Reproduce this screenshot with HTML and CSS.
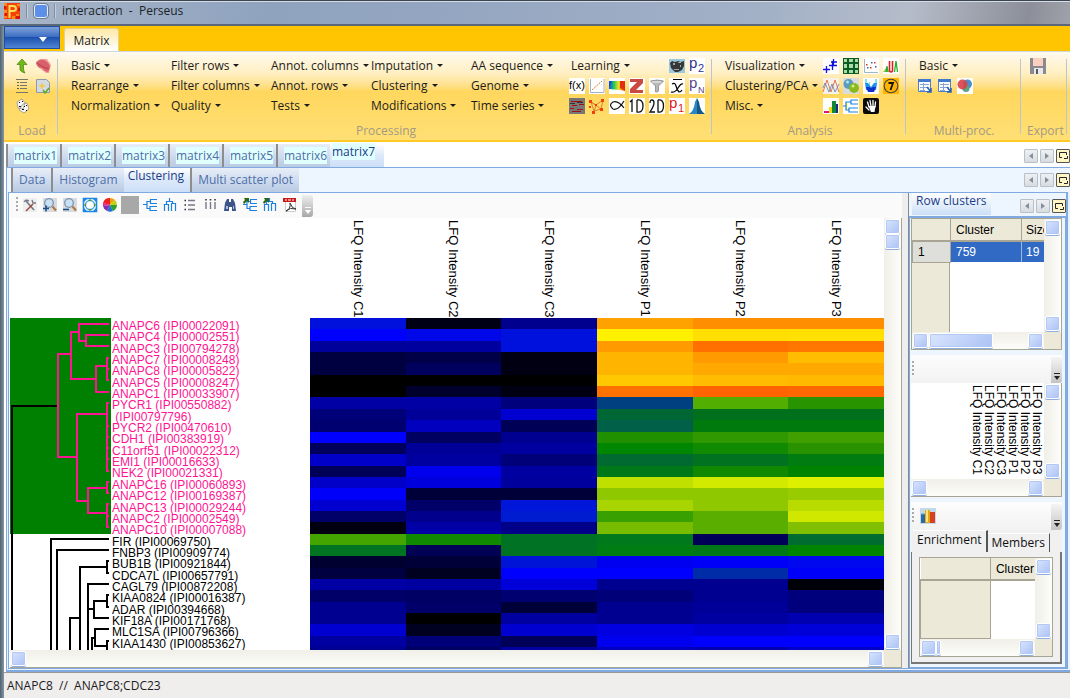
FILE: index.html
```html
<!DOCTYPE html>
<html lang="en">
<head>
<meta charset="utf-8">
<title>interaction - Perseus</title>
<link rel="stylesheet" href="styles.css">
</head>
<body>
<div class="window">
  <header class="titlebar">
    <svg class="ic" viewBox="0 0 16 16"><path fill="#f5420c" d="M0 0h16v16H0z"/><path fill="#ff8a1c" d="M0 0h3v3H0zM13 1h3v2h-3zM0 7h3v3H0zM12 11h3v2h-3zM8 13h3v3H8zM0 13h3v2H0z"/><path fill="#d81500" d="M0 3h2v3H0zM14 5h2v3h-2zM1 10h2v3H1zM12 13h4v3h-4z"/><path fill="none" stroke="#ffdf55" stroke-width="2" d="M5.500 15V3H9q3 0 3 2.500T9 8H6"/></svg>
    <span class="tsep"></span>
    <button class="quick" aria-label="Quick access"></button>
    <span class="tsep"></span>
    <h1>interaction&nbsp; -&nbsp; Perseus</h1>
  </header>

  <nav class="ribbon-tabs">
    <button class="app-menu" aria-label="Application menu"><i class="caret"></i></button>
    <button class="ribbon-tab">Matrix</button>
  </nav>

  <section class="ribbon">
    <div class="group load">
      <div class="cells">
        <button class="ib" aria-label="Generic upload"><svg class="ic" viewBox="0 0 16 16"><path fill="#72b81c" stroke="#4c8e0c" stroke-width=".8" d="M7 1 2 6.500h3V12q1 2 5 3-1.500-2-1.500-4V6.500H12z"/></svg></button>
        <button class="ib" aria-label="Raw upload"><svg class="ic" viewBox="0 0 16 16"><path fill="#f0a09a" d="M1 4 5 1h7l4 6-2 8h-3L3 9z"/><path fill="#d9606a" d="M1 5q3-4 8-3 5 2 6 7l-2 5q-4-1-6-4-5 0-6-5"/><path stroke="#b84050" fill="none" d="m2 5 6 4 6 2"/></svg></button>
        <button class="ib" aria-label="Text list"><svg class="ic" viewBox="0 0 16 16"><path stroke="#776" fill="none" d="M1 1.500h12M1 14.500h12M5 4.500h7M5 7.500h7M5 10.500h7"/><path stroke="#332" stroke-width="1.500" stroke-dasharray="1 2" d="M3 4v8"/></svg></button>
        <button class="ib" aria-label="New script"><svg class="ic" viewBox="0 0 16 16"><path fill="#d4dae2" stroke="#8e9aa8" d="M1.500 1.500h10l3 3v10h-13z"/><path fill="#f6c84a" d="m7 4 1 3 3 1-3 1-1 3-1-3-3-1 3-1z"/><path fill="none" stroke="#5aa820" stroke-width="1.500" d="m8 12 2 3 4-5"/></svg></button>
        <button class="ib" aria-label="Random"><svg class="ic" viewBox="0 0 16 16"><path fill="#f6f6f6" stroke="#888" stroke-width=".7" d="m2 4 5-3 3 4-2 6-5-1zM8 6l4-1 2 6-5 4-5-3z"/><path fill="#111" d="M4 4h1v1H4zM7 3h1v1H7zM4 8h2v1H4zM9 8h1v1H9zM7 11h2v1H7zM11 12h1v1h-1zM11 7h1v1h-1z"/></svg></button>
      </div>
      <p>Load</p>
    </div>
    <div class="group processing">
      <div class="menus">
        <button>Basic<i class="caret"></i></button><button>Rearrange<i class="caret"></i></button><button>Normalization<i class="caret"></i></button>
        <button>Filter rows<i class="caret"></i></button><button>Filter columns<i class="caret"></i></button><button>Quality<i class="caret"></i></button>
        <button>Annot. columns<i class="caret"></i></button><button>Annot. rows<i class="caret"></i></button><button>Tests<i class="caret"></i></button>
        <button>Imputation<i class="caret"></i></button><button>Clustering<i class="caret"></i></button><button>Modifications<i class="caret"></i></button>
        <button>AA sequence<i class="caret"></i></button><button>Genome<i class="caret"></i></button><button>Time series<i class="caret"></i></button>
      </div>
      <div class="cells seven">
        <button class="wide">Learning<i class="caret"></i></button>
        <button class="ib" aria-label="Parameter optimization"><svg class="ic" viewBox="0 0 16 16"><path fill="#9cc8dc" d="M0 1h16v14H0z"/><path fill="#35383b" d="m1 5 2-2 3 1 3-1 3 1 3-1v5l-2 4-4 2H6l-4-4z"/><path fill="#a8a8a0" d="M4 5h2v2H4zM9 4h3v1H9zM5 11h5v1H5zM11 7h1v2h-1z"/></svg></button>
        <button class="ib" aria-label="p2"><svg class="ic" viewBox="0 0 16 16"><path fill="#fff" d="M0 0h16v16H0z"/><text x="0" y="10" font-size="15" fill="#303090">p</text><text x="9" y="14" font-size="11" fill="#303090">2</text></svg></button>
        <button class="ib" aria-label="Density function"><svg class="ic" viewBox="0 0 16 16"><path fill="#fff" d="M0 0h16v16H0z"/><text x="0" y="11" font-size="11" fill="#000">f(x)</text></svg></button>
        <button class="ib" aria-label="Performance curve"><svg class="ic" viewBox="0 0 16 16"><path fill="#fff" d="M0 0h16v16H0z"/><path fill="none" stroke="#9cb0c8" d="M1.500 1v13.500H15V1"/><path stroke="#d87820" stroke-dasharray="2 1" d="M3 12 13 3"/></svg></button>
        <button class="ib" aria-label="Density"><svg class="ic" viewBox="0 0 16 16"><path fill="#fff" d="M0 0h16v16H0z"/><path fill="url(#rain)" d="M0 3h16v10l-5-1-11-1z"/><path fill="#e03010" d="M11 3h5v9l-5-2z"/><path fill="#1040e0" opacity=".7" d="M0 3h3L1 8H0z"/></svg></button>
        <button class="ib" aria-label="Z-score"><svg class="ic" viewBox="0 0 16 16"><path fill="#fff" d="M0 0h16v16H0z"/><path fill="#c94a42" d="M1 1h13v4l-7 7h7v3H1v-4l7-7H1z"/></svg></button>
        <button class="ib" aria-label="Filter"><svg class="ic" viewBox="0 0 16 16"><path fill="#fff" d="M0 0h16v16H0z"/><path fill="#b9b9b9" stroke="#888" stroke-width=".8" d="m1.500 3 5 5v6h2l1-1V8l5-5q-6-2-13 0"/><path stroke="#f4f4f4" d="M3 4h9"/></svg></button>
        <button class="ib" aria-label="Average"><svg class="ic" viewBox="0 0 16 16"><path fill="#fff" d="M0 0h16v16H0z"/><path fill="none" stroke="#000" stroke-width="1.200" d="M4 1.500h9M3 6q3-2 4 2t3 6q2 0 3-2M14 6q-2-1-5 4t-7 4"/></svg></button>
        <button class="ib" aria-label="pN"><svg class="ic" viewBox="0 0 16 16"><path fill="#fff" d="M0 0h16v16H0z"/><text x="0" y="10" font-size="15" fill="#584488">p</text><text x="9" y="15" font-size="9" fill="#584488">N</text></svg></button>
        <button class="ib" aria-label="Imputed values"><svg class="ic" viewBox="0 0 16 16"><path fill="#777" d="M0 0h16v16H0z"/><path stroke="#a01010" d="M2 3.500h11M3 7.500h5M10 6.500h5M1 10.500h4M8 11.500h6M3 13.500h9"/><path stroke="#333" d="M8 4.500h6M1 5.500h5"/></svg></button>
        <button class="ib" aria-label="Network"><svg class="ic" viewBox="0 0 16 16"><path fill="none" stroke="#d88428" d="m2 4 5 3 7-5-2 9-7 2-3-9 10 7M7 7l-2 7"/><path fill="#f04010" d="M0 2h3v3H0zM6 6h2v2H6zM12 1h3v3h-3zM11 10h3v3h-3zM3 13h3v3H3zM0 8h2v2H0z"/></svg></button>
        <button class="ib" aria-label="Fisher exact test"><svg class="ic" viewBox="0 0 16 16"><path fill="#fff" d="M0 0h16v16H0z"/><path fill="none" stroke="#111" stroke-width="1.200" d="M15 3Q9 13 4 11-1 7 4 4q5-2 11 6"/></svg></button>
        <button class="ib" aria-label="1D annotation"><svg class="ic" viewBox="0 0 16 16"><path fill="#fff" d="M0 0h16v16H0z"/><path fill="none" stroke="#111" stroke-width="1.300" d="m1 4 2-2v12M8 2v12q6 1 6-6T8 2"/></svg></button>
        <button class="ib" aria-label="2D annotation"><svg class="ic" viewBox="0 0 16 16"><path fill="#fff" d="M0 0h16v16H0z"/><path fill="none" stroke="#111" stroke-width="1.300" d="M1 5q0-3 2-3t2 3-4 9h5M9 2v12q5.500 1 5.500-6T9 2"/></svg></button>
        <button class="ib" aria-label="p1"><svg class="ic" viewBox="0 0 16 16"><path fill="#fff" d="M0 0h16v16H0z"/><text x="0" y="10" font-size="15" fill="#e01818">p</text><text x="9" y="14" font-size="11" fill="#e01818">1</text></svg></button>
        <button class="ib" aria-label="Distribution"><svg class="ic" viewBox="0 0 16 16"><path fill="#fff" d="M0 0h16v16H0z"/><path fill="#2a86c0" d="M0 16Q5 13 6 4l2-4v16z"/><path fill="#14588c" d="m8 0 2 4q1 9 6 12H8z"/></svg></button>
      </div>
      <p>Processing</p>
    </div>
    <div class="group analysis">
      <div class="menus">
        <button>Visualization<i class="caret"></i></button><button>Clustering/PCA<i class="caret"></i></button><button>Misc.<i class="caret"></i></button>
      </div>
      <div class="cells four">
        <button class="ib" aria-label="Scatter"><svg class="ic" viewBox="0 0 16 16"><path fill="#fff" d="M0 0h16v16H0z"/><path stroke="#1010e0" stroke-width="1.300" d="M0 11.500h7M3.500 8v7M6 7.500h8M9.500 3v9M8 4h6M10.500 1v6"/></svg></button>
        <button class="ib" aria-label="Multi scatter"><svg class="ic" viewBox="0 0 16 16"><path fill="#0c5a24" d="M0 0h16v16H0z"/><path fill="#a8dca8" d="M1 1h3v3H1zM6 1h4v3H6zM12 1h3v3h-3zM1 6h3v4H1zM6 6h4v4H6zM12 6h3v4h-3zM1 12h3v3H1zM6 12h4v3H6zM12 12h3v3h-3z"/></svg></button>
        <button class="ib" aria-label="Profile"><svg class="ic" viewBox="0 0 16 16"><path fill="#fff" d="M0 0h16v16H0z"/><path stroke="#a0b4cc" fill="none" d="M1.500 1v13.500H15"/><path fill="#3c62c0" d="M4 9h1.500v1.500H4zM8 4h1.500v1.500H8zM12 8h1.500v1.500H12z"/><path fill="#d83820" d="M3 6h1.500v1.500H3zM7 9h1.500v1.500H7zM11 4h1.500v1.500H11z"/></svg></button>
        <button class="ib" aria-label="Histogram"><svg class="ic" viewBox="0 0 16 16"><path fill="#fff" d="M0 0h16v16H0z"/><path fill="#98c850" d="m0 14 3-4 3 4z"/><path fill="none" stroke="#20b030" stroke-width="1.300" d="m3 14 1-6 1 6M11.500 14l1.500-11 1.500 11"/><path fill="none" stroke="#e02020" stroke-width="1.600" d="M6.500 3v10q1.500 2 3 0V3"/></svg></button>
        <button class="ib" aria-label="Profile plot"><svg class="ic" viewBox="0 0 16 16"><path fill="#f7f1e8" d="M0 0h16v16H0z"/><path fill="none" stroke="#e06030" stroke-width=".8" d="m0 14 4-12 4 12 4-12 4 12"/><path fill="none" stroke="#5080c0" stroke-width=".8" d="m0 10 2-5 4 9 3-8 3 8 4-8"/></svg></button>
        <button class="ib" aria-label="Category counting"><svg class="ic" viewBox="0 0 16 16"><path fill="#d8dce0" d="M0 0h16v16H0z"/><circle cx="5.500" cy="6" r="5" fill="#5a9cc0"/><circle cx="11" cy="10" r="5" fill="#8aba20"/><circle cx="4.500" cy="4" r="1.500" fill="#b8e0f4"/><circle cx="10" cy="8" r="1.500" fill="#d0ec80"/></svg></button>
        <button class="ib" aria-label="Volcano plot"><svg class="ic" viewBox="0 0 16 16"><path fill="#fff" d="M0 0h16v16H0z"/><path fill="#78e8f0" d="M2 1h2v5H2zM12 1h2v5h-2zM6 4h1v4H6z"/><path fill="#2090e8" d="M2 5h3l3 4 3-4h3l-1 7H3z"/><path fill="#1030c8" d="M3 9h3l2 1 2-1h3l-2 5H5z"/></svg></button>
        <button class="ib" aria-label="Numeric Venn"><svg class="ic" viewBox="0 0 16 16"><path fill="#ffb400" d="M0 0h16v16H0z"/><circle cx="8" cy="8" r="6.800" fill="none" stroke="#444" stroke-width="1.100"/><path fill="none" stroke="#111" stroke-width="1.800" d="M5.500 5H10L7.500 12"/></svg></button>
        <button class="ib" aria-label="Bars"><svg class="ic" viewBox="0 0 16 16"><path fill="#fff" d="M0 0h16v16H0z"/><path fill="#d81878" d="M1 13h5v2H1z"/><path fill="#f0dc10" d="M6 9h3v6H6z"/><path fill="#108838" d="M9 3h4v12H9z"/><path fill="#183080" d="M13 6h2v9h-2z"/></svg></button>
        <button class="ib" aria-label="Hierarchical clustering"><svg class="ic" viewBox="0 0 16 16"><path fill="#fff" d="M0 0h16v16H0z"/><path fill="none" stroke="#1c80e0" stroke-width="1.200" d="M0 8h3M15 2H8v4h7M8 4H3v8h3M15 10H6v4h9"/><path stroke="#88b838" d="M3.500 5v6"/></svg></button>
        <button class="ib" aria-label="Select manually"><svg class="ic" viewBox="0 0 16 16"><rect width="16" height="16" rx="2" fill="#0a0a0a"/><path fill="none" stroke="#fff" stroke-width="1.300" stroke-linecap="round" d="M6 9 4.500 4M8 8 7 2.500M10 8V2.500M12 9l.5-5M6 12 3 9"/><path fill="#fff" d="M5.500 8h7l-1 6H8z"/></svg></button>
      </div>
      <p>Analysis</p>
    </div>
    <div class="group multi">
      <div class="cells three">
        <button class="wide">Basic<i class="caret"></i></button>
        <button class="ib" aria-label="Matching rows"><svg class="ic" viewBox="0 0 16 16"><use href="#table"/></svg></button>
        <button class="ib" aria-label="Matching columns"><svg class="ic" viewBox="0 0 16 16"><use href="#table"/></svg></button>
        <button class="ib" aria-label="Venn diagram"><svg class="ic" viewBox="0 0 16 16"><path fill="#fff" d="M0 0h16v16H0z"/><circle cx="10.500" cy="6" r="4.500" fill="#4a90c8"/><circle cx="9" cy="10.500" r="3.500" fill="#58a888"/><circle cx="5.500" cy="6.500" r="5" fill="#d84048" opacity=".9"/></svg></button>
      </div>
      <p>Multi-proc.</p>
    </div>
    <div class="group export">
      <div class="cells one">
        <button class="ib" aria-label="Save"><svg class="ic" viewBox="0 0 16 16"><path fill="#8a8a90" d="M0 0h16v16H0z"/><path fill="#fbcfbf" d="M3 0h10v8H3z"/><path fill="#e8e8ea" d="M4 10h9v6H4z"/><path fill="#555c68" d="M6 11h2v5H6z"/></svg></button>
      </div>
      <p>Export</p>
    </div>
  </section>

  <div class="tabrow level1">
    <button><span>matrix1</span></button><button><span>matrix2</span></button><button><span>matrix3</span></button><button><span>matrix4</span></button><button><span>matrix5</span></button><button><span>matrix6</span></button><button class="on"><span>matrix7</span></button>
    <div class="pager"><button class="prev" aria-label="Previous matrix"></button><button class="next" aria-label="Next matrix"></button><button class="pop" aria-label="Matrix windows"><svg viewBox="0 0 11 11"><use href="#popi"/></svg></button></div>
  </div>

  <div class="outer">
    <div class="tabrow level2">
      <button>Data</button><button>Histogram</button><button class="on">Clustering</button><button>Multi scatter plot</button>
      <div class="pager"><button class="prev" aria-label="Previous view"></button><button class="next" aria-label="Next view"></button><button class="pop" aria-label="View windows"><svg viewBox="0 0 11 11"><use href="#popi"/></svg></button></div>
    </div>

    <main class="inner">
      <section class="plot">
        <div class="toolbar">
          <span class="grip"></span>
          <button class="ib" aria-label="Properties"><svg class="ic" viewBox="0 0 16 16"><path fill="#eee" d="M1 1h14v14H1z"/><path stroke="#707888" stroke-width="1.600" d="m4 4 8 9"/><path stroke="#a04838" stroke-width="1.400" d="m11 7-7 7"/><path fill="none" stroke="#778" stroke-width="1.300" d="M2 5q2-3 5-1M10 3l1 3h3"/></svg></button>
          <button class="ib" aria-label="Zoom in"><svg class="ic" viewBox="0 0 16 16"><use href="#lens"/><path stroke="#18508c" stroke-width="1.600" d="M1 11.500h6M4 8.500v6"/></svg></button>
          <button class="ib" aria-label="Zoom out"><svg class="ic" viewBox="0 0 16 16"><use href="#lens"/><path stroke="#18508c" stroke-width="1.600" d="M1 12.500h6"/></svg></button>
          <button class="ib" aria-label="Full view"><svg class="ic" viewBox="0 0 16 16"><path fill="#fff" stroke="#1a86e8" stroke-width="1.600" d="M1.500 1.500h13v13h-13z"/><circle cx="8" cy="8" r="4.500" fill="#fff" stroke="#58a8f0" stroke-width="1.400"/><path fill="#1a86e8" d="M2 2h3L2 5zM14 2v3l-3-3zM2 14v-3l3 3zM14 14h-3l3-3z"/><path fill="#4c9838" d="m8 2 2 2H6zM8 14l2-2H6zM2 8l2-2v4zM14 8l-2-2v4z"/></svg></button>
          <button class="ib" aria-label="Colours"><svg class="ic" viewBox="0 0 16 16"><path fill="#f02020" d="M8 8 1 6a7 7 0 0 1 7-5z"/><path fill="#f0a010" d="M8 8V1a7 7 0 0 1 5 2z"/><path fill="#c0d010" d="m8 8 5-5a7 7 0 0 1 2 5z"/><path fill="#30a030" d="M8 8h7a7 7 0 0 1-4 6z"/><path fill="#2070d0" d="m8 8 3 6a7 7 0 0 1-6 0z"/><path fill="#8030b0" d="m8 8-3 6a7 7 0 0 1-4-5z"/><path fill="#e02090" d="M8 8 1 9V6z"/></svg></button>
          <button class="ib" aria-label="Background colour"><span class="swatch"></span></button>
          <button class="ib" aria-label="Row tree"><svg class="ic" viewBox="0 0 16 16"><use href="#rowtree"/></svg></button>
          <button class="ib" aria-label="Column tree"><svg class="ic" viewBox="0 0 16 16"><use href="#coltree"/></svg></button>
          <button class="ib" aria-label="Row names"><svg class="ic" viewBox="0 0 16 16"><path stroke="#778" stroke-width="1.400" d="M6 3.500h7M6 8h7M6 12.500h7"/><path stroke="#2a2a38" stroke-width="1.600" d="M2.500 3.500h1.500M2.500 8h1.500M2.500 12.500h1.500"/></svg></button>
          <button class="ib" aria-label="Column names"><svg class="ic" viewBox="0 0 16 16"><path stroke="#778" stroke-width="1.400" d="M4 5v7M8.500 5v7M13 5v7"/><path stroke="#333" stroke-width="1.600" d="M4 2v1.500M8.500 2v1.500M13 2v1.500"/></svg></button>
          <button class="ib" aria-label="Find"><svg class="ic" viewBox="0 0 16 16"><path fill="#3c5488" d="M5 2h2v3h2V2h2l2 4 1 8h-4v-4H7v4H2l1-8z"/><path fill="#a8bce0" d="M4 9h2v3H4zM11 9h1v3h-1z"/></svg></button>
          <button class="ib" aria-label="Reorder rows"><svg class="ic" viewBox="0 0 16 16"><use href="#rowtree"/><path fill="#286818" d="M2 1h5v5L5 4 2 7 1 5l2-2z"/></svg></button>
          <button class="ib" aria-label="Reorder columns"><svg class="ic" viewBox="0 0 16 16"><use href="#coltree"/><path fill="#286818" d="M2 1h5v5L5 4 2 7 1 5l2-2z"/></svg></button>
          <button class="ib" aria-label="Export PDF"><svg class="ic" viewBox="0 0 16 16"><path fill="#fff" stroke="#ccc" d="M3.500 2.500h10v12h-10z"/><path fill="#c81818" d="M1 1h13v4H1z"/><path stroke="#fff" d="M3 3h2M6 3h3M10 3h2"/><path fill="none" stroke="#333" d="M8 6q1 6-4 8 4-4 10-2-4 0-6-6"/></svg></button>
          <button class="more" aria-label="More tools"></button>
        </div>
        <div class="viewport">
          <div class="chart">
            <div class="colnames" id="colnames"></div>
            <div class="body">
              <svg class="tree" viewBox="0 0 102 332" preserveAspectRatio="none">
                <path fill="#008000" d="M0 0h101v216H0z"/>
                <g fill="none" stroke-width="2">
                  <path stroke="#000" d="M48 88H2v244M99 221H41v111M99 232H47v100M99 243h-2v12h2M97 249H70v83M99 266H78v66M70 300H60v32M78 291h6M97 283H84v17h15M99 277h-2v12h2M85 320h-3v12M99 311H85v17h12M99 323h-2v9"/>
                  <path stroke="#ff1493" d="M61 36H48v103h19M69 14h-8v47h25M99 6H69v17h7M99 17H76v11h23M97 48H86v26h13M99 40h-2v22h2M97 51h2M97 96H67v87h11M99 85h-2v68h2M97 170H78v25h19M99 164h-2v11h2M99 186h-2v23h2M97 108h2M97 119h2M97 130h2M97 141h2M97 198h2"/>
                </g>
              </svg>
              <ul class="rownames" id="rownames"></ul>
              <svg class="heat" id="heat" viewBox="0 0 6 29.250" preserveAspectRatio="none" shape-rendering="crispEdges"></svg>
            </div>
          </div>
          <div class="vbar"><b></b><b></b><b class="end"></b></div>
          <div class="hbar"><b></b><b class="end"></b></div>
          <div class="corner"></div>
        </div>
      </section>

      <aside class="side">
        <div class="sidehead">
          <button class="sidetab">Row clusters</button>
          <div class="pager"><button class="prev" aria-label="Previous panel"></button><button class="next" aria-label="Next panel"></button><button class="pop" aria-label="Panel windows"><svg viewBox="0 0 11 11"><use href="#popi"/></svg></button></div>
        </div>
        <div class="sidebody">
          <div class="scroller rows">
            <div class="pane">
              <table class="grid">
                <thead><tr><th></th><th>Cluster</th><th>Size</th></tr></thead>
                <tbody><tr><th>1</th><td>759</td><td>19</td></tr></tbody>
              </table>
            </div>
            <div class="vbar"><b></b><b class="end"></b></div>
            <div class="hbar"><b></b><b class="thumb"></b><b class="end"></b></div>
            <div class="corner"></div>
          </div>
          <div class="subbar"><span class="grip"></span><button class="more" aria-label="More plot tools"></button></div>
          <div class="scroller names">
            <div class="pane mini"><span>LFQ Intensity C1</span><span>LFQ Intensity C2</span><span>LFQ Intensity C3</span><span>LFQ Intensity P1</span><span>LFQ Intensity P2</span><span>LFQ Intensity P3</span></div>
            <div class="vbar"><b></b><b class="end"></b></div>
            <div class="hbar"><b></b><b class="end"></b></div>
            <div class="corner"></div>
          </div>
          <div class="subbar"><span class="grip"></span><button class="ib" aria-label="Enrichment analysis"><svg class="ic" viewBox="0 0 16 16"><path fill="#c4d8ec" d="M0 0h16v16H0z"/><path fill="#2868a8" d="M1 6h4v9H1z"/><path fill="#e0a818" d="M5 2h5v13H5z"/><path fill="#fce478" d="M6 2h2v12H6z"/><path fill="#d84020" d="M10 4h5v11h-5z"/><path fill="#60a0d8" d="m1 6 2-1 2 1-2 1z"/></svg></button><button class="more" aria-label="More enrichment tools"></button></div>
          <div class="subtabs"><button class="on">Enrichment</button><button>Members</button></div>
          <div class="subpane">
            <div class="scroller">
              <div class="pane">
                <table class="grid empty"><thead><tr><th></th><th>Cluster</th></tr></thead><tbody><tr><th></th><td></td></tr></tbody></table>
              </div>
              <div class="vbar"><b></b><b class="end"></b></div>
              <div class="hbar"><b></b><b class="sliver"></b><b class="end"></b></div>
              <div class="corner"></div>
            </div>
          </div>
        </div>
      </aside>
    </main>
  </div>
  <footer class="status">ANAPC8&nbsp; //&nbsp; ANAPC8;CDC23</footer>
</div>

<svg class="defs" aria-hidden="true">
  <defs>
    <linearGradient id="rain"><stop offset="0" stop-color="#1050e8"/><stop offset=".3" stop-color="#20c860"/><stop offset=".6" stop-color="#f0e020"/><stop offset="1" stop-color="#e83010"/></linearGradient>
    <symbol id="popi" viewBox="0 0 11 11"><path fill="none" stroke="#223" d="M4 7.500H1.500v-5h7V5M6 8.500h3.500V6"/></symbol>
    <symbol id="table" viewBox="0 0 16 16"><path fill="#fff" stroke="#5080c8" d="M1.500 1.500h12v12h-12z"/><path fill="#4078d0" d="M1 1h13v3H1z"/><path stroke="#88a4d0" d="M3 6.500h9M3 9.500h9M3 12.500h5M6.500 5v8"/><path stroke="#2860b8" fill="none" stroke-width="1.500" d="m10 9 4 5M14 10v4h-4"/></symbol>
    <symbol id="lens" viewBox="0 0 16 16"><path fill="#d8dade" d="M1 1h14v14H1z"/><circle cx="7" cy="6" r="4.300" fill="#c8e2f4" stroke="#7c94b0" stroke-width="1.300"/><path stroke="#b07840" stroke-width="2" d="m10.500 9.500 3.500 4"/></symbol>
    <symbol id="rowtree" viewBox="0 0 16 16"><path fill="none" stroke="#1c80e0" stroke-width="1.200" d="M1 7.500h4M15 2.500H8.500v4H15M8.500 4.500H5v7h3M15 9.500H8v4h7"/></symbol>
    <symbol id="coltree" viewBox="0 0 16 16"><path fill="none" stroke="#1c80e0" stroke-width="1.200" d="M7.500 1v3M2.500 14V7.500h4V14M4.500 7V4.500h6V7M9.500 14V6.500h4V14"/></symbol>
  </defs>
</svg>
<script src="app.js"></script>
</body>
</html>
```

FILE: styles.css
```css
* { box-sizing: border-box; }
body { margin: 0; font: 12px/16px "Open Sans", "Noto Sans", sans-serif; color: #1c1c1c; background: #5f707c; }
h1, p, ul { margin: 0; padding: 0; font: inherit; list-style: none; }
button { font: inherit; color: inherit; border: 0; padding: 0; margin: 0; background: none; white-space: nowrap; text-align: left; }
table { border-collapse: collapse; }
.defs { position: absolute; width: 0; height: 0; }
.ic { display: block; width: 16px; height: 16px; overflow: visible; font-family: "Liberation Sans", sans-serif; }
.window { height: 100vh; min-height: 640px; display: flex; flex-direction: column; padding-left: 4px; background: linear-gradient(90deg, #4f626e, #8597a6 4px, #fff 4px); overflow: hidden; }

.titlebar { flex: none; height: 26px; margin-left: -4px; padding: 0 4px 3px; display: flex; align-items: center; gap: 6px; border-top: 1px solid #3c4450; border-bottom: 2px solid #5c6878; background: linear-gradient(100deg, #a9b6c8, #8fa3bf 25%, #93a5c0 40%, #a3b1c7 72%, #b5bcc9 85%, #8c8f99 96%, #a0a2aa); box-shadow: inset 0 1px #d5dce6; }
.tsep { width: 2px; height: 14px; background: #7f8da1; border-right: 1px solid #c6d0dd; }
.quick { width: 14px; height: 14px; border: 1px solid #e8eefa; border-radius: 3px; background: #5c8fe8; outline: 1px solid #6d7c93; }
.titlebar h1 { color: #1a1f28; }

.ribbon-tabs { flex: none; display: flex; gap: 4px; height: 25px; background: #ffc500; }
.app-menu { width: 56px; height: 23px; padding-left: 34px; border: 1px solid #1c4da0; background: linear-gradient(#7da0d8, #3f70c4 45%, #1d52ae 50%, #4f83d4); color: #fff; }
.app-menu .caret { border-width: 5px 4px 0; }
.ribbon-tab { margin-top: 2px; width: 55px; text-align: center; padding-top: 2px; border: 1px solid #e2cf9a; border-bottom: 0; border-radius: 3px 3px 0 0; background: linear-gradient(#ffe9a8, #fff); }
.caret { display: inline-block; border: solid transparent; border-width: 3px 3px 0; border-top-color: currentColor; margin-left: 4px; vertical-align: 3px; }
.app-menu .caret { margin: 0; vertical-align: 0; }

.ribbon { flex: none; display: flex; height: 91px; border-top: 1px solid #cfd6e0; border-bottom: 2px solid #ffc928; background: linear-gradient(#fffaf0, #ffefc0 25%, #ffe08a 38%, #ffd75e 45%, #ffdf74); }
.group { position: relative; display: grid; grid-template: 65px 20px / auto auto; justify-content: start; padding-top: 4px; }
.group::after { content: ""; position: absolute; right: 0; top: 7px; height: 75px; border-right: 1px solid #b9c6d2; }
.group p { grid-column: 1 / -1; text-align: center; color: #a39a86; line-height: 20px; }
.menus { display: grid; grid-template-rows: repeat(3, 20px); grid-auto-flow: column; grid-auto-columns: 100px; }
.cells { display: grid; grid-template: repeat(3, 20px) / repeat(2, 20px); align-items: center; }
.seven { grid-template-columns: repeat(7, 20px); }
.four { grid-template-columns: repeat(4, 20px); }
.three { grid-template-columns: repeat(3, 20px); }
.one { grid-template-columns: 20px; }
.seven .wide { grid-column: span 5; padding-left: 2px; }
.three .wide { grid-column: span 3; padding-left: 2px; }
.ib { width: 20px; height: 20px; padding: 2px 0; }
.load { width: 54px; padding-left: 11px; }
.load p { width: 34px; }
.processing { width: 654px; padding-left: 13px; }
.processing p { width: 630px; }
.processing .cells { margin-left: -2px; }
.analysis { width: 194px; padding-left: 13px; }
.analysis p { width: 170px; }
.analysis .menus { grid-auto-columns: 98px; }
.multi { width: 115px; padding-left: 11px; }
.multi p { width: 94px; }
.export { flex: 1; padding-left: 6px; }
.export::after { right: auto; left: 45px; }
.export .cells { margin-left: 3px; }

.tabrow { flex: none; display: flex; position: relative; color: #4d6ea6; }
.tabrow > button { border-left: 2px solid #8d8d8d; background: linear-gradient(#e9eef7, #cfdcf0 50%, #b9cae3); }
.tabrow > .on { border-left: 0; color: #1c3c88; background: linear-gradient(#fff, #dfeafa 45%, #cbdff8); padding-bottom: 8px; }
.level1 { height: 25px; padding: 2px 0 0 2px; }
.level1 > button { width: 54px; padding-left: 6px; }
.level1 > .on { padding-left: 2px; }
.level1 span { background: #e0ffff; }
.level2 { height: 24px; padding-left: 4px; background: #edf5fe; }
.level2 > button { padding: 0 6px; }
.level2 > .on { padding: 0 6px 8px 4px; }
.pager { margin-left: auto; display: flex; gap: 2px; align-items: center; }
.pager button { display: grid; place-items: center; width: 14px; height: 14px; border: 1px solid #b9c0c8; border-radius: 1px; background: linear-gradient(#eef0f3, #d8dce1); }
.pager .prev::before, .pager .next::before { content: ""; border: solid transparent; border-width: 3px 4px; }
.pager .prev::before { border-left: 0; border-right-color: #868f99; }
.pager .next::before { border-right: 0; border-left-color: #868f99; }
.pager .pop { border-color: #555; background: #fff6c4; }
.pager svg { display: block; width: 11px; height: 11px; }

.outer { flex: 1; min-height: 0; margin-left: 2px; display: flex; flex-direction: column; border: solid #7fa9e0; border-width: 1px 0 2px 1px; background: #e8f2fd; }
.inner { flex: 1; min-height: 0; margin: 0 2px 1px 1px; display: flex; gap: 6px; border: solid #7fa9e0; border-width: 1px 2px 1px 1px; background: #eee; }
.plot { flex: 1; min-width: 0; display: flex; flex-direction: column; background: #fafafa; padding-left: 1px; }
.toolbar { flex: none; align-self: flex-start; display: flex; align-items: center; height: 25px; margin-left: 4px; padding: 0 0 1px 2px; }
.toolbar .ib { padding: 2px; }
.grip { width: 4px; height: 16px; background: repeating-linear-gradient(#aaa 0 2px, transparent 2px 4px) 0 0 / 2px 100% no-repeat; }
.swatch { display: block; width: 18px; height: 18px; margin: -1px; background: #a8a8a8; }
.more { display: grid; align-content: end; justify-items: center; align-self: flex-end; width: 11px; height: 22px; margin-left: 2px; padding-bottom: 3px; border-radius: 0 3px 3px 0; background: linear-gradient(#eee, #a8a8a8); color: #222; }
.more::before { content: ""; width: 6px; border-top: 1px solid; margin-bottom: 2px; }
.more::after { content: ""; border: solid transparent; border-width: 4px 3px 0; border-top-color: currentColor; }
.toolbar .more { color: #fff; }

.viewport, .scroller { display: grid; grid-template: minmax(0, 1fr) 17px / minmax(0, 1fr) 17px; border: solid #a9a594; border-width: 0 1px 1px 0; background: #fff; min-height: 0; }
.viewport { flex: 1; }
.chart { display: flex; flex-direction: column; overflow: hidden; min-height: 0; }
.colnames { flex: none; height: 100px; margin-left: 300px; display: grid; grid-template-columns: repeat(6, 1fr); justify-items: center; overflow: hidden; font: 13px/16px "Liberation Sans", Arial, sans-serif; color: #000; }
.colnames span { writing-mode: vertical-rl; padding-top: 2px; white-space: nowrap; }
.body { flex: 1; min-height: 0; display: grid; grid-template: minmax(0, 1fr) / 102px 198px minmax(0, 1fr); }
.tree, .heat { display: block; width: 100%; height: 100%; }
.rownames { display: grid; grid-auto-rows: minmax(0, 1fr); padding-top: 3px; min-height: 0; font: 12px/11px "Liberation Sans", Arial, sans-serif; color: #000; white-space: pre; }
.rownames .sel { color: #ff1493; }

.vbar, .hbar { display: flex; background: linear-gradient(90deg, #f0efe8, #fdfdfa); padding: 1px; }
.vbar { flex-direction: column; }
.hbar { background: linear-gradient(#f0efe8, #fdfdfa); grid-row: 2; grid-column: 1; }
.vbar b, .hbar b { flex: none; width: 15px; height: 15px; border: 1px solid #fff; border-radius: 2px; background: linear-gradient(135deg, #d9e5fe, #abc2f5); box-shadow: inset 0 0 0 1px #b4c8f6, 0 1px #8fb0de; }
.vbar .end { margin-top: auto; }
.hbar .end { margin-left: auto; }
.hbar .thumb { width: 64px; margin-left: 1px; }
.hbar .sliver { width: 5px; }
.corner { background: #ece9d8; }

.side { flex: none; width: 158px; display: flex; flex-direction: column; border-left: 1px solid #888; background: #edf5fe; }
.sidehead { flex: none; height: 25px; display: flex; padding-left: 3px; border-bottom: 2px solid #7fa9e0; }
.sidetab { width: 79px; padding: 0 0 8px 4px; color: #1c3c88; background: linear-gradient(#fff, #cbdff8); height: 22px; }
.sidehead .pager { padding-top: 3px; }
.sidebody { flex: 1; min-height: 0; display: flex; flex-direction: column; padding: 0 3px 3px 1px; border: solid #7fa9e0; border-width: 0 1px 1px 1px; }
.scroller { flex: none; border-width: 1px; }
.scroller .pane { overflow: hidden; min-height: 0; }
.rows { height: 132px; }
.names { height: 114px; border-width: 0 1px 1px 0; }
.mini { display: flex; justify-content: flex-end; padding: 2px 1px 0 0; font: 12px/12px "Liberation Sans", Arial, sans-serif; color: #000; }
.mini span { writing-mode: vertical-rl; white-space: nowrap; }
.grid { table-layout: fixed; width: 144px; height: 100%; font: 12px/16px "Liberation Sans", Arial, sans-serif; color: #000; }
.grid th { font-weight: normal; text-align: left; background: #ece9d8; border-right: 1px solid #a9a594; padding: 0 5px; }
.grid thead th { height: 22px; border-bottom: 2px solid #a9a594; }
.grid th:first-child { width: 38px; }
.grid thead th:nth-child(2) { width: 71px; }
.grid thead th:nth-child(3), .grid td:nth-child(3) { padding-left: 4px; }
.grid tbody th { background: #dedfdb; border: 1px solid #a9a594; }
.grid td { background: #316ac5; color: #fff; border-right: 1px solid #9fb8e0; padding: 0 5px; }
.rows .grid { height: auto; }
.rows .grid tbody tr { height: 21px; }
.rows .pane { background: linear-gradient(90deg, #ece9d8 37px, #a9a594 37px 38px, #fff 38px); }
.grid.empty th:first-child { width: 68px; }
.empty tbody th { background: #ece9d8; }
.empty td { background: #fff; }
.subbar { flex: none; height: 28px; margin-top: 5px; display: flex; align-items: center; padding-left: 1px; background: linear-gradient(#fdfdfd, #f2f2f2); }
.subbar .ib { margin-left: 2px; padding: 2px; }
.subbar .more { margin-left: auto; height: 26px; background: linear-gradient(#f4f4f4, #c4c4c4); }
.subtabs { flex: none; display: flex; align-items: flex-end; height: 22px; padding-left: 2px; background: #f0f0f0; }
.subtabs button { height: 19px; padding: 0 4px; border-right: 1px solid #555; border-top: 1px solid #fff; color: #111; }
.subtabs .on { height: 22px; border-right-width: 2px; padding-bottom: 4px; }
.subpane { flex: 1; min-height: 0; display: flex; padding: 5px 7px; background: #f0f0f0; border: solid #777; border-width: 0 2px 2px 1px; }
.subpane .scroller { flex: 1; min-width: 0; }

.status { flex: none; height: 26px; padding: 5px 3px; background: #f0eded; border-top: 1px solid #999; }
```

FILE: app.js
```js
const names = [
  'ANAPC6 (IPI00022091)', 'ANAPC4 (IPI00002551)', 'ANAPC3 (IPI00794278)', 'ANAPC7 (IPI00008248)',
  'ANAPC8 (IPI00005822)', 'ANAPC5 (IPI00008247)', 'ANAPC1 (IPI00033907)', 'PYCR1 (IPI00550882)',
  ' (IPI00797796)', 'PYCR2 (IPI00470610)', 'CDH1 (IPI00383919)', 'C11orf51 (IPI00022312)',
  'EMI1 (IPI00016633)', 'NEK2 (IPI00021331)', 'ANAPC16 (IPI00060893)', 'ANAPC12 (IPI00169387)',
  'ANAPC13 (IPI00029244)', 'ANAPC2 (IPI00002549)', 'ANAPC10 (IPI00007088)', 'FIR (IPI00069750)',
  'FNBP3 (IPI00909774)', 'BUB1B (IPI00921844)', 'CDCA7L (IPI00657791)', 'CAGL79 (IPI00872208)',
  'KIAA0824 (IPI00016387)', 'ADAR (IPI00394668)', 'KIF18A (IPI00171768)', 'MLC1SA (IPI00796366)',
  'KIAA1430 (IPI00853627)'
];
const selectedRows = 19;
const colours = `
0011dd 000014 00008f ffa200 ff8e00 ff8e00
0000ff 0008ea 0011dd fff000 ffde00 ffe000
00009a 00009e 0011dd ff9a00 ff7000 ff7600
000040 000048 000012 ffb400 ff9a00 ffbc00
000040 00005e 000012 ffb400 ffa800 ffa800
000000 000000 000000 ffc800 ffbc00 ffba00
000000 00002c 000012 ff7200 ff6400 ff6800
0000a4 0000a4 00007c 004080 52ae00 289400
000078 000098 0000d0 006634 00701c 00701c
000070 0000be 000056 006048 007a0c 007a0c
0000ff 000060 000090 209000 309800 40a000
00005c 000098 0000a0 008600 108a00 289200
0000c8 0000a0 000078 006a30 007220 007c10
000058 0000ee 0000a0 007818 108800 008400
0000c8 0000dc 00009c c0e000 d2ea00 dcf000
0000fa 000038 000038 90c800 90c800 98cc00
0000d0 000068 0016d8 a8d400 90c800 b8dc00
000068 00008c 001cd0 38a000 5aae00 d0e800
000010 0000a4 000088 78bc00 5aae00 80c000
44a400 108800 007224 00781c 000058 006c30
007420 000054 007224 007c14 007818 008400
000030 000038 0014d8 0000f0 0000f8 0008f0
000040 000020 0000ff 0000ff 002ca8 0000f8
0000a4 0000a0 0000d8 000090 000090 000008
000068 000064 000070 000078 000090 00007c
000090 000068 000038 000090 000098 00007c
000090 000000 0000a0 000090 0000a0 0000b0
0000d0 000020 0000d0 0000e0 0000d0 0000d8
0000a0 000078 000058 0000ee 0000ff 0000ff
000090 000060 0000a0 0000c0 0000b0 0000c8`.trim().split('\n').map(r => r.split(' '));

document.getElementById('rownames').innerHTML =
  names.map((n, i) => `<li${i < selectedRows ? ' class="sel"' : ''}>${n}</li>`).join('');
document.getElementById('colnames').innerHTML =
  ['C1', 'C2', 'C3', 'P1', 'P2', 'P3'].map(c => `<span>LFQ Intensity ${c}</span>`).join('');
document.getElementById('heat').innerHTML =
  colours.map((row, y) => row.map((c, x) =>
    `<rect x="${x}" y="${y}" width="1" height="1" fill="#${c}"/>`).join('')).join('');
```
